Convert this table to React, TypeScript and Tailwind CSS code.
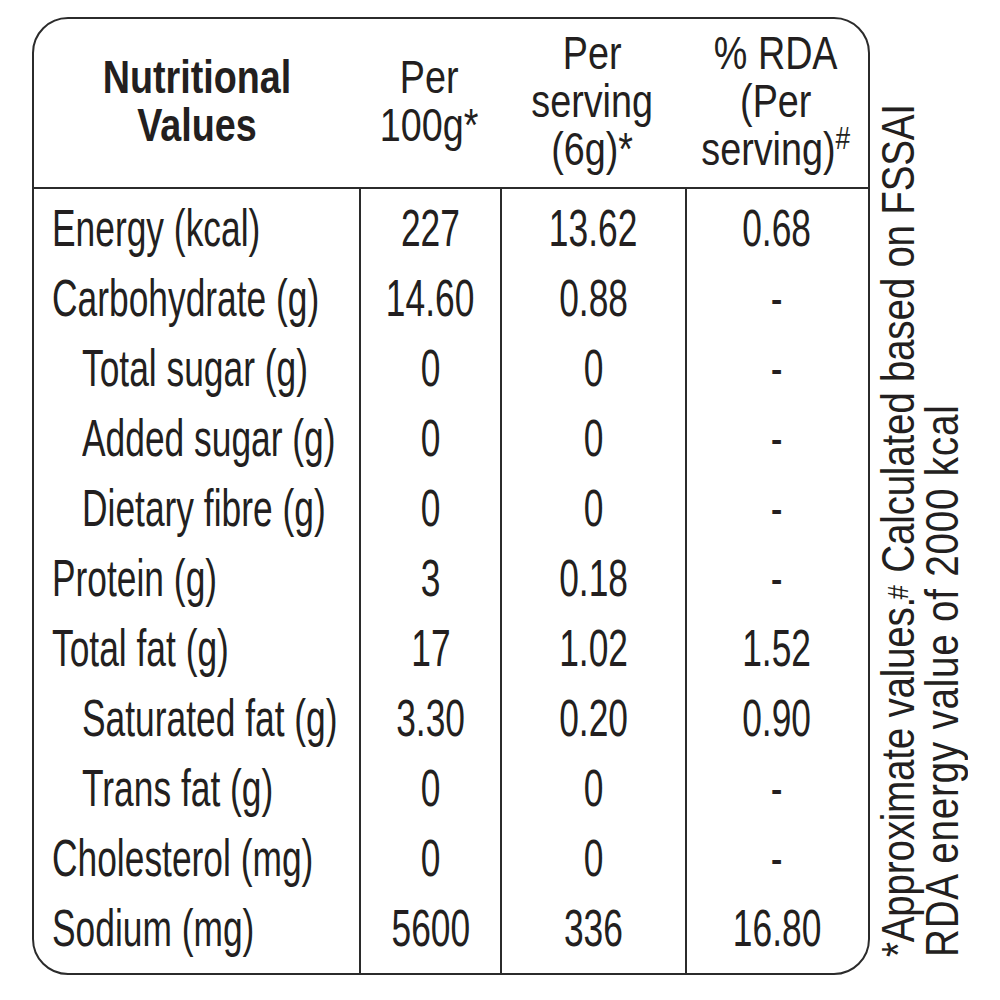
const rows = [
  { label: "Energy (kcal)", indent: false, a: "227", b: "13.62", c: "0.68" },
  { label: "Carbohydrate (g)", indent: false, a: "14.60", b: "0.88", c: "-" },
  { label: "Total sugar (g)", indent: true, a: "0", b: "0", c: "-" },
  { label: "Added sugar (g)", indent: true, a: "0", b: "0", c: "-" },
  { label: "Dietary fibre (g)", indent: true, a: "0", b: "0", c: "-" },
  { label: "Protein (g)", indent: false, a: "3", b: "0.18", c: "-" },
  { label: "Total fat (g)", indent: false, a: "17", b: "1.02", c: "1.52" },
  { label: "Saturated fat (g)", indent: true, a: "3.30", b: "0.20", c: "0.90" },
  { label: "Trans fat (g)", indent: true, a: "0", b: "0", c: "-" },
  { label: "Cholesterol (mg)", indent: false, a: "0", b: "0", c: "-" },
  { label: "Sodium (mg)", indent: false, a: "5600", b: "336", c: "16.80" },
]

// condensed look: Arial-width font squeezed horizontally
const Narrow = ({ children, left }: { children: React.ReactNode; left?: boolean }) => (
  <span className={`inline-block whitespace-nowrap scale-x-[0.68] ${left ? "origin-left" : "origin-center"}`}>
    {children}
  </span>
)

const Head = ({ children, bold }: { children: React.ReactNode; bold?: boolean }) => (
  <div className={`flex items-center justify-center ${bold ? "font-bold" : ""}`}>
    <div className="inline-block whitespace-nowrap scale-x-[0.82] origin-center">{children}</div>
  </div>
)

export default function App() {
  return (
    <div className="min-h-screen bg-white text-[#231f20] font-['Liberation_Sans',Arial,sans-serif]">
      <div className="flex pl-[32px] pt-[17px]">
        <div className="w-[838px] h-[958px] shrink-0 border-[2.5px] border-[#2b2b2b] rounded-[36px] overflow-hidden flex flex-col">
          {/* header */}
          <div className="grid grid-cols-[325px_141px_185px_182px] h-[170px] pb-[4px] border-b-[2.5px] border-[#2b2b2b] text-[46px] leading-[48px] text-center">
            <Head bold>
              Nutritional
              <br />
              Values
            </Head>
            <Head>
              Per
              <br />
              100g*
            </Head>
            <Head>
              Per
              <br />
              serving
              <br />
              (6g)*
            </Head>
            <Head>
              % RDA
              <br />
              (Per
              <br />
              serving)<sup className="text-[32px]">#</sup>
            </Head>
          </div>

          {/* body */}
          <div className="grid grid-cols-[325px_141px_185px_182px] flex-1 text-[52px] leading-[60px]">
            <div className="flex flex-col pt-[4px]">
              {rows.map((r) => (
                <div key={r.label} className={`h-[70px] flex items-center ${r.indent ? "pl-[48px]" : "pl-[18px]"}`}>
                  <Narrow left>{r.label}</Narrow>
                </div>
              ))}
            </div>
            <div className="flex flex-col pt-[4px] border-l-[2.5px] border-[#2b2b2b]">
              {rows.map((r) => (
                <div key={r.label} className="h-[70px] flex items-center justify-center">
                  <Narrow>{r.a}</Narrow>
                </div>
              ))}
            </div>
            <div className="flex flex-col pt-[4px] border-l-[2.5px] border-[#2b2b2b]">
              {rows.map((r) => (
                <div key={r.label} className="h-[70px] flex items-center justify-center">
                  <Narrow>{r.b}</Narrow>
                </div>
              ))}
            </div>
            <div className="flex flex-col pt-[4px] border-l-[2.5px] border-[#2b2b2b]">
              {rows.map((r) => (
                <div key={r.label} className="h-[70px] flex items-center justify-center">
                  <Narrow>{r.c}</Narrow>
                </div>
              ))}
            </div>
          </div>
        </div>

        {/* side note, reads bottom to top */}
        <div className="flex flex-col justify-end pb-[18px] pl-[6px]">
          <div className="h-[900px] shrink-0 [writing-mode:vertical-rl] rotate-180 text-[46px] leading-[44px] whitespace-nowrap">
            <div className="scale-y-[0.84] origin-top">
              <div className="tracking-[-0.3px]">
                *Approximate values. <sup className="text-[30px]">#</sup>Calculated based on FSSAI
              </div>
              <div className="tracking-[0.9px]">RDA energy value of 2000 kcal</div>
            </div>
          </div>
        </div>
      </div>
    </div>
  )
}
